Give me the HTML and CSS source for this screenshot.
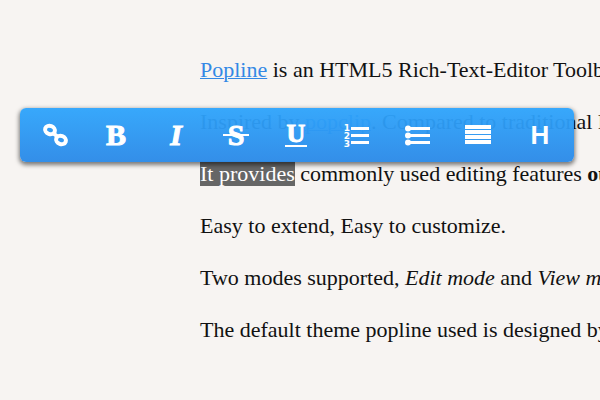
FILE: index.html
```
<!DOCTYPE html>
<html lang="en">
<head>
    <meta charset="utf-8">
    <meta name="viewport" content="width=device-width, initial-scale=1">
    <title>Popline</title>
    <link rel="stylesheet" href="styles.css">
</head>
<body>
    <main class="editor">
        <p><a href="#popline">Popline</a> is an HTML5 Rich-Text-Editor Toolbar</p>
        <p>Inspired by <a href="#popclip">popclip</a>. Compared to traditional Rich</p>
        <p><mark>It provides</mark> commonly used editing features <b>out</b></p>
        <p>Easy to extend, Easy to customize.</p>
        <p>Two modes supported, <i>Edit mode</i> and <i>View mode</i></p>
        <p>The default theme popline used is designed by</p>
    </main>

    <div class="popline" role="toolbar" aria-label="Formatting">
        <button type="button" aria-label="Link">
            <svg viewBox="0 0 28 28">
                <g class="stroke">
                    <ellipse cx="9" cy="9" rx="5" ry="4" transform="rotate(20 9 9)" />
                    <ellipse cx="20" cy="19" rx="5" ry="4" transform="rotate(20 20 19)" />
                    <line x1="12" y1="12" x2="17" y2="16" />
                </g>
            </svg>
        </button>
        <button type="button" aria-label="Bold">
            <svg viewBox="0 0 28 28"><text class="serif" x="14" y="24">B</text></svg>
        </button>
        <button type="button" aria-label="Italic">
            <svg viewBox="0 0 28 28"><text class="serif italic" x="14" y="24">I</text></svg>
        </button>
        <button type="button" aria-label="Strikethrough">
            <svg viewBox="0 0 28 28">
                <text class="serif" x="13" y="24">S</text>
                <rect x="0" y="13" width="26" height="2" />
            </svg>
        </button>
        <button type="button" aria-label="Underline">
            <svg viewBox="0 0 28 28">
                <text class="serif small" x="13" y="21">U</text>
                <rect x="2" y="24" width="22" height="2" />
            </svg>
        </button>
        <button type="button" aria-label="Ordered list">
            <svg viewBox="0 0 28 28">
                <path d="M8 6h18v3H8zM8 13h18v3H8zM8 20h18v3H8z" />
                <text class="digit" x="4" y="10">1</text>
                <text class="digit" x="4" y="18">2</text>
                <text class="digit" x="4" y="26">3</text>
            </svg>
        </button>
        <button type="button" aria-label="Unordered list">
            <svg viewBox="0 0 28 28">
                <path d="M4 6h22v3H4zM4 13h22v3H4zM4 20h22v3H4z" />
                <circle cx="4" cy="7.5" r="3" />
                <circle cx="4" cy="14.5" r="3" />
                <circle cx="4" cy="21.5" r="3" />
            </svg>
        </button>
        <button type="button" aria-label="Justify">
            <svg viewBox="0 0 28 28">
                <path d="M1 4h26v4H1zM1 9h26v4H1zM1 14h26v4H1zM1 19h26v4H1z" />
            </svg>
        </button>
        <button type="button" aria-label="Heading">
            <svg viewBox="0 0 28 28"><text class="sans" x="15" y="23">H</text></svg>
        </button>
    </div>
</body>
</html>
```
FILE: styles.css
```
body {
    margin: 0;
    background-color: #f7f4f2;
    color: #111;
    font-family: "Liberation Serif", "Times New Roman", serif;
    font-size: 22px;
    line-height: 24px;
    overflow: hidden;
}

.editor {
    padding: 58px 0 0 200px;
    white-space: nowrap;
}

.editor p {
    margin: 0 0 28px;
}

.editor a {
    color: #3388e5;
    text-decoration-thickness: 1px;
}

.editor mark {
    background-color: #666;
    color: #fff;
}

/* floats over the text, above the selection */
.popline {
    position: absolute;
    top: 108px;
    left: 20px;
    right: 26px;
    display: flex;
    box-sizing: border-box;
    padding: 0 5px;
    border-radius: 6px;
    background-image: linear-gradient(rgba(45, 164, 252, 0.95), rgba(45, 139, 232, 0.97));
    box-shadow: 0 2px 4px 1px rgba(0, 0, 0, 0.5);
}

.popline button {
    display: flex;
    flex: 1;
    align-items: center;
    justify-content: center;
    height: 54px;
    padding: 0;
    border: none;
    background: none;
    cursor: pointer;
}

.popline svg {
    width: 28px;
    height: 28px;
    overflow: visible;
    fill: #fff;
}

.popline .stroke {
    fill: none;
    stroke: #fff;
    stroke-width: 4;
}

.popline text {
    font-weight: bold;
    text-anchor: middle;
}

.popline .serif {
    font-family: "Liberation Serif", serif;
    font-size: 30px;
    stroke: #fff;
    stroke-width: 1;
}

.popline .small {
    font-size: 26px;
}

.popline .italic {
    font-style: italic;
}

.popline .sans {
    font-family: "Liberation Sans", sans-serif;
    font-size: 26px;
}

.popline .digit {
    font-family: "DejaVu Sans", sans-serif;
    font-size: 9px;
}
```
